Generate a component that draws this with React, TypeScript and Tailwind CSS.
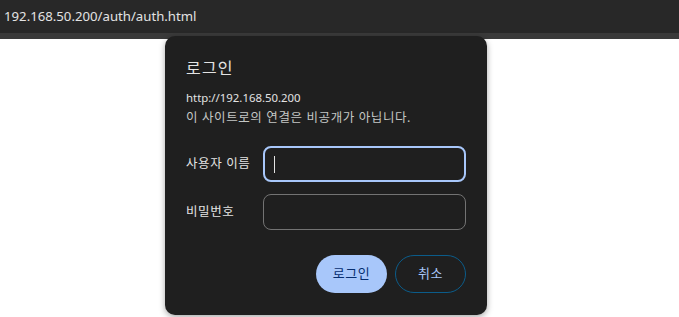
export default function App() {
  const font = { fontFamily: '"Noto Sans", "Noto Sans CJK KR", sans-serif' }
  return (
    <div className="relative h-[317px] w-[679px] overflow-hidden bg-white" style={font}>
      <div className="flex h-[33px] items-center bg-[#282828] pl-[4px] text-[13.2px] text-[#e3e3e3]">
        192.168.50.200/auth/auth.html
      </div>
      <div className="h-[6px] bg-[#3a3a3a]" />

      <div className="absolute left-[165px] top-[36px] flex w-[322px] flex-col rounded-[10px] bg-[#1f1f1f] px-[21px] pb-[22px] pt-[18px] shadow-[0_2px_6px_rgba(0,0,0,0.35)]">
        <h1 className="text-[16px] leading-[28px] tracking-[1.2px] text-[#e3e3e3]">로그인</h1>
        <div className="mt-[6px] text-[12px] leading-[20px] text-[#e3e3e3]">
          <div className="text-[11.4px]">http://192.168.50.200</div>
          <div className="text-[12.5px] tracking-[0.6px] text-[#c4c7c5]">
            이 사이트로의 연결은 비공개가 아닙니다.
          </div>
        </div>

        <div className="mt-[18px] flex flex-col gap-[12px]">
          <div className="flex items-center">
            <label className="w-[77px] text-[12.5px] tracking-[0.6px] text-[#e3e3e3]">사용자 이름</label>
            <div className="flex h-[36px] flex-1 items-center rounded-[8px] border-2 border-[#a8c7fa] pl-[9px]">
              <div className="h-[17px] w-[1px] bg-[#e3e3e3]" />
            </div>
          </div>
          <div className="flex items-center">
            <label className="w-[77px] text-[12.5px] tracking-[0.6px] text-[#e3e3e3]">비밀번호</label>
            <div className="h-[36px] flex-1 rounded-[8px] border border-[#737373]" />
          </div>
        </div>

        <div className="mt-[25px] flex justify-end gap-[8px]">
          <button className="h-[38px] w-[71px] rounded-full bg-[#a8c7fa] text-[13px] tracking-[0.6px] text-[#062e6f]">
            로그인
          </button>
          <button className="h-[38px] w-[71px] rounded-full border border-[#0b5c8a] text-[13px] tracking-[0.6px] text-[#a8c7fa]">
            취소
          </button>
        </div>
      </div>
    </div>
  )
}
